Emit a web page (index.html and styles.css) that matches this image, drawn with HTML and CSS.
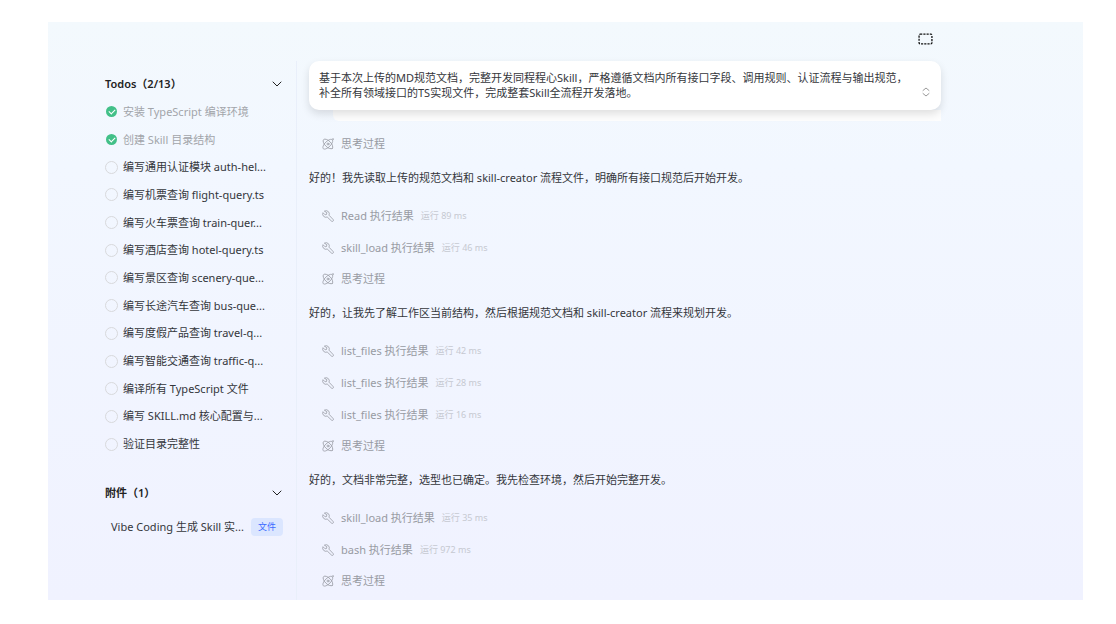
FILE: index.html
```html
<!DOCTYPE html>
<html lang="zh-CN">
<head>
    <meta charset="UTF-8">
    <meta name="viewport" content="width=device-width, initial-scale=1.0">
    <title>Skill 开发</title>
    <link rel="stylesheet" href="styles.css">
</head>
<body>

<!-- Shared icons -->
<svg class="icon-defs" aria-hidden="true">
    <symbol id="icon-down" viewBox="0 0 10 10">
        <path d="M1 3l4 4 4-4"/>
    </symbol>
    <symbol id="icon-think" viewBox="0 0 12 12">
        <ellipse cx="6" cy="6" rx="6.200" ry="3" transform="rotate(45 6 6)"/>
        <path d="M9.600 1.300C8.300.900 6 2.100 4 4 1.400 6.500.2 9.600 1.300 10.700S5.500 10.600 8 8c1.900-2 3.100-4.300 2.700-5.600"/>
        <circle cx="6" cy="6" r="1"/>
        <circle cx="10.900" cy="1.100" r=".3"/>
    </symbol>
    <symbol id="icon-tool" viewBox="0 0 12 12">
        <path d="M2.700 1a3.200 3.200 0 0 1 4.300 4.200l4.100 4.300a1.100 1.100 0 0 1-1.600 1.600L5.200 7A3.200 3.200 0 0 1 1 2.700l2.100 2.100 1.400-.3.300-1.400z"/>
    </symbol>
</svg>

<div class="panel">
    <header class="topbar">
        <button class="icon-btn" type="button" aria-label="展开画布">
            <svg class="icon-frame" viewBox="0 0 14 11"><rect x="1" y="1" width="12" height="9" rx="1"/></svg>
        </button>
    </header>

    <div class="content">
        <aside class="sidebar">
            <button class="section-title" type="button">
                <span>Todos（2/13）</span>
                <svg class="icon-down"><use href="#icon-down"/></svg>
            </button>
            <ul class="todo-list">
                <li><label class="done"><input type="checkbox" checked>安装 TypeScript 编译环境</label></li>
                <li><label class="done"><input type="checkbox" checked>创建 Skill 目录结构</label></li>
                <li><label><input type="checkbox">编写通用认证模块 auth-hel...</label></li>
                <li><label><input type="checkbox">编写机票查询 flight-query.ts</label></li>
                <li><label><input type="checkbox">编写火车票查询 train-quer...</label></li>
                <li><label><input type="checkbox">编写酒店查询 hotel-query.ts</label></li>
                <li><label><input type="checkbox">编写景区查询 scenery-que...</label></li>
                <li><label><input type="checkbox">编写长途汽车查询 bus-que...</label></li>
                <li><label><input type="checkbox">编写度假产品查询 travel-q...</label></li>
                <li><label><input type="checkbox">编写智能交通查询 traffic-q...</label></li>
                <li><label><input type="checkbox">编译所有 TypeScript 文件</label></li>
                <li><label><input type="checkbox">编写 SKILL.md 核心配置与...</label></li>
                <li><label><input type="checkbox">验证目录完整性</label></li>
            </ul>

            <button class="section-title" type="button">
                <span>附件（1）</span>
                <svg class="icon-down"><use href="#icon-down"/></svg>
            </button>
            <div class="attachment">
                <span>Vibe Coding 生成 Skill 实...</span>
                <span class="tag">文件</span>
            </div>
        </aside>

        <main class="chat">
            <div class="prompt">
                <p>基于本次上传的MD规范文档，完整开发同程程心Skill，严格遵循文档内所有接口字段、调用规则、认证流程与输出规范，<br>补全所有领域接口的TS实现文件，完成整套Skill全流程开发落地。</p>
                <button class="icon-btn" type="button" aria-label="展开">
                    <svg class="icon-expand" viewBox="0 0 8 10"><path d="M1 3.500l3-2.500 3 2.500M1 6.500l3 2.500 3-2.500"/></svg>
                </button>
            </div>
            <div class="bubble"></div>

            <button class="step think" type="button"><svg><use href="#icon-think"/></svg>思考过程</button>
            <p class="message">好的！我先读取上传的规范文档和 skill-creator 流程文件，明确所有接口规范后开始开发。</p>
            <button class="step" type="button"><svg><use href="#icon-tool"/></svg>Read 执行结果<small>运行 89 ms</small></button>
            <button class="step" type="button"><svg><use href="#icon-tool"/></svg>skill_load 执行结果<small>运行 46 ms</small></button>
            <button class="step think" type="button"><svg><use href="#icon-think"/></svg>思考过程</button>
            <p class="message">好的，让我先了解工作区当前结构，然后根据规范文档和 skill-creator 流程来规划开发。</p>
            <button class="step" type="button"><svg><use href="#icon-tool"/></svg>list_files 执行结果<small>运行 42 ms</small></button>
            <button class="step" type="button"><svg><use href="#icon-tool"/></svg>list_files 执行结果<small>运行 28 ms</small></button>
            <button class="step" type="button"><svg><use href="#icon-tool"/></svg>list_files 执行结果<small>运行 16 ms</small></button>
            <button class="step think" type="button"><svg><use href="#icon-think"/></svg>思考过程</button>
            <p class="message">好的，文档非常完整，选型也已确定。我先检查环境，然后开始完整开发。</p>
            <button class="step" type="button"><svg><use href="#icon-tool"/></svg>skill_load 执行结果<small>运行 35 ms</small></button>
            <button class="step" type="button"><svg><use href="#icon-tool"/></svg>bash 执行结果<small>运行 972 ms</small></button>
            <button class="step think" type="button"><svg><use href="#icon-think"/></svg>思考过程</button>
        </main>
    </div>
</div>

</body>
</html>
```
FILE: styles.css
```css
* {
    box-sizing: border-box;
}

body {
    margin: 0;
    padding: 22px 33px 24px 48px;
    min-height: 100vh;
    display: flex;
    background: #fff;
    color: #34363b;
    font-family: "Noto Sans", "Noto Sans CJK SC", sans-serif;
    font-size: 11px;
    line-height: 18px;
}

button {
    padding: 0;
    border: none;
    background: none;
    color: inherit;
    font: inherit;
    text-align: left;
    cursor: pointer;
}

p, ul {
    margin: 0;
    padding: 0;
}

svg {
    fill: none;
    stroke: currentColor;
    stroke-linecap: round;
    stroke-linejoin: round;
    flex: none;
}

.icon-defs {
    position: absolute;
    width: 0;
    height: 0;
}

.panel {
    flex: 1;
    display: flex;
    flex-direction: column;
    background: linear-gradient(#f3f9fd, #f2f7ff 25%, #f0f2ff);
}

.topbar {
    height: 39px;
    padding: 0 150px 5px 0;
    display: flex;
    align-items: center;
    justify-content: flex-end;
}

.icon-btn {
    display: flex;
}

.icon-frame {
    width: 15px;
    height: 12px;
    stroke: #111;
    stroke-width: 1.2;
    stroke-dasharray: 2 1;
    stroke-linecap: butt;
}

.content {
    flex: 1;
    display: flex;
}

/* Sidebar */
.sidebar {
    width: 249px;
    padding: 12px 13px 0 57px;
    border-right: 1px solid #e9effa;
}

.section-title {
    width: 100%;
    height: 22px;
    display: flex;
    align-items: center;
    justify-content: space-between;
    color: #222;
    font-weight: 600;
}

.icon-down {
    width: 10px;
    height: 10px;
    margin-right: 1px;
}

.todo-list {
    min-height: 360px;
    margin: 3px 0 24px;
    display: grid;
    grid-auto-rows: 1fr;
    list-style: none;
}

.todo-list li,
.todo-list label {
    display: flex;
    align-items: center;
    white-space: nowrap;
}

.todo-list label {
    gap: 5px;
}

.todo-list .done {
    color: #a2a5aa;
}

.todo-list input {
    appearance: none;
    width: 13px;
    height: 13px;
    margin: 0;
    border: 1px solid #d8d9dc;
    border-radius: 50%;
    display: grid;
    place-items: center;
}

.todo-list input:checked {
    border: 1px solid transparent;
    background: #42c088 padding-box;
}

.todo-list input:checked::after {
    content: "";
    width: 5px;
    height: 3px;
    margin-bottom: 2px;
    border: solid #fff;
    border-width: 0 0 1px 1px;
    transform: rotate(-45deg);
}

.attachment {
    height: 46px;
    padding-left: 6px;
    display: flex;
    align-items: center;
    justify-content: space-between;
    white-space: nowrap;
}

.tag {
    padding: 0 7px;
    border-radius: 4px;
    background: #dbe6ff;
    color: #3a6bff;
    font-size: 9px;
}

/* Chat */
.chat {
    flex: 1;
    padding: 0 142px 4px 12px;
    display: flex;
    flex-direction: column;
}

.prompt {
    position: relative;
    padding: 9px 11px 10px 10px;
    display: flex;
    align-items: flex-end;
    justify-content: space-between;
    border-radius: 10px;
    background: #fff;
    box-shadow: 0 4px 9px rgba(0, 0, 0, 0.12);
    line-height: 15px;
}

.icon-expand {
    width: 8px;
    height: 10px;
    margin-bottom: 3px;
    stroke: #999;
}

.bubble {
    height: 11px;
    margin: 0 0 8px 24px;
    border-radius: 0 0 0 6px;
    background: #fdfdfd;
}

.message {
    margin: 10px 0 13px;
}

.step {
    height: 32px;
    padding-left: 13px;
    display: flex;
    align-items: center;
    color: #989ba3;
}

.think {
    height: 30px;
}

.step svg {
    width: 12px;
    height: 12px;
    margin-right: 7px;
    stroke-width: 0.8;
}

.step small {
    margin-left: 7px;
    color: #c6c9d1;
    font-size: 9px;
}
```
